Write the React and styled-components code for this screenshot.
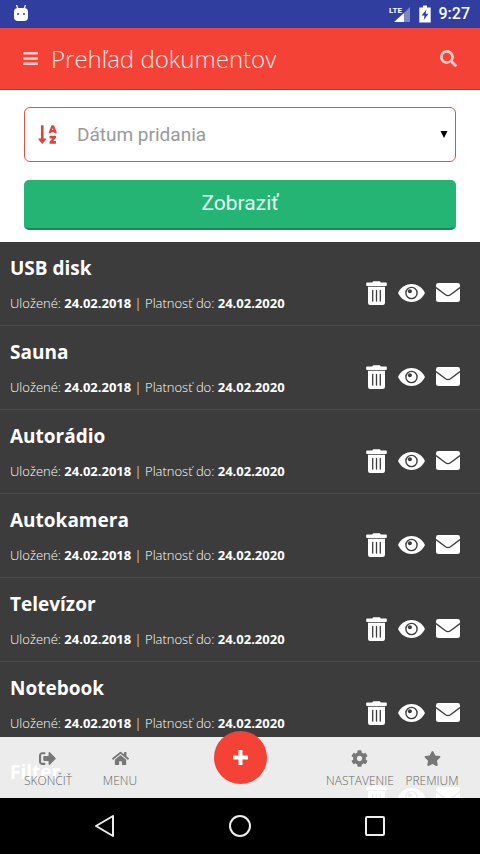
import React from 'react'
import styled, { createGlobalStyle } from 'styled-components'
import {
    FaBars,
    FaSearch,
    FaSortAlphaDown,
    FaSignOutAlt,
    FaHome,
    FaCog,
    FaStar,
} from 'react-icons/fa'

const GlobalStyle = createGlobalStyle`
    * {
        box-sizing: border-box;
    }
    body {
        margin: 0;
        font-family: 'Open Sans', 'Noto Sans', sans-serif;
    }
    button, select {
        font-family: inherit;
        border: 0;
        padding: 0;
        background: none;
        color: inherit;
    }
    svg {
        display: block;
    }
`

const Screen = styled.div`
    height: 100vh;
    display: flex;
    flex-direction: column;
    overflow: hidden;
    background: #fff;
`

const StatusBar = styled.div`
    height: 28px;
    flex: none;
    display: flex;
    align-items: center;
    justify-content: space-between;
    padding: 0 10px 0 13px;
    background: #303f9f;
    color: #fff;
`

const StatusIcons = styled.div`
    display: flex;
    align-items: center;
    gap: 8px;
`

const Clock = styled.span`
    font: 500 16px/28px Roboto, sans-serif;
`

const Header = styled.header`
    height: 62px;
    flex: none;
    display: flex;
    align-items: center;
    gap: 12px;
    padding: 0 23px 0 22px;
    background: #f44336;
    border-bottom: 1px solid #b23a32;
    color: #ffd0cb;
`

const Title = styled.h1`
    flex: 1;
    margin: 0;
    font-size: 24px;
    line-height: 32px;
    font-weight: 330;
    color: #ffebe8;
`

const IconButton = styled.button`
    display: flex;
    font-size: 17px;
`

const Main = styled.main`
    flex: 1;
    min-height: 0;
    position: relative;
`

const Scroller = styled.div`
    height: 100%;
    overflow: hidden;
`

const Form = styled.form`
    display: flex;
    flex-direction: column;
    gap: 18px;
    padding: 17px 24px 12px;
    font-family: Roboto, sans-serif;
`

const SelectBox = styled.label`
    height: 55px;
    display: flex;
    align-items: center;
    gap: 19px;
    padding: 0 7px 0 12px;
    border: 1px solid #d9534a;
    border-radius: 6px;
    color: #db4437;
`

const Select = styled.select`
    flex: 1;
    height: 100%;
    appearance: none;
    outline: none;
    font-size: 19px;
    color: #999;
`

const SubmitButton = styled.button`
    && {
        height: 50px;
        padding-bottom: 2px;
        background: #24b474;
        border-bottom: 2px solid #1b8757;
        border-radius: 5px;
        font-size: 21px;
        color: #e4fff3;
    }
`

const List = styled.ul`
    margin: 0;
    padding: 0;
    list-style: none;
    background: #3c3c3c;
    color: #fff;
`

const Row = styled.li`
    height: 84px;
    display: flex;
    align-items: center;
    justify-content: space-between;
    padding: 1px 20px 0 10px;
    border-bottom: 1px solid #4c4c4c;
`

const Name = styled.h2`
    margin: 0 0 13px;
    font-size: 19px;
    line-height: 24px;
    font-weight: 700;
`

const Dates = styled.p`
    margin: 0;
    font-size: 13px;
    line-height: 20px;
    font-weight: 330;

    b {
        font-weight: 700;
    }
`

const Actions = styled.div`
    display: flex;
    align-items: center;
    gap: 11px;
    padding-top: 17px;
`

const TabBar = styled.nav`
    position: absolute;
    left: 0;
    right: 0;
    bottom: 0;
    height: 61px;
    display: grid;
    grid-template-columns: 3fr 3fr 7fr 3fr 3fr;
    justify-items: center;
    padding: 0 12px;
    background: rgba(255, 255, 255, 0.9);
`

const Tab = styled.button`
    && {
        display: flex;
        flex-direction: column;
        align-items: center;
        justify-content: center;
        gap: 5px;
        padding-top: 4px;
        font-size: 12px;
        line-height: 18px;
        font-weight: 330;
        color: #666;
    }

    svg {
        font-size: 17px;
        color: #777;
    }
`

const AddButton = styled.button`
    && {
        width: 53px;
        height: 53px;
        margin-top: -6px;
        display: flex;
        align-items: center;
        justify-content: center;
        border-radius: 50%;
        background: #f44336;
        color: #fff;
    }
`

const SystemNav = styled.div`
    height: 56px;
    flex: none;
    display: flex;
    align-items: center;
    justify-content: center;
    gap: 111px;
    background: #000;
    color: #eee;
`

const BugdroidIcon = () => (
    <svg width="16" height="18" viewBox="0 0 16 18">
        <path d="M3.5 0l1.500 4M12.500 0L11 4" stroke="#fff" strokeWidth="1.2" />
        <rect x="1" y="3" width="14" height="13" rx="4" fill="#fff" />
        <circle cx="5" cy="9" r="1" fill="#303f9f" />
        <circle cx="11" cy="9" r="1" fill="#303f9f" />
    </svg>
)

const SignalIcon = () => (
    <svg width="22" height="18" viewBox="0 0 22 18">
        <path d="M21 2v15h-6V8z" fill="#7c86c6" />
        <path d="M15 8v9H5z" fill="#fff" />
        <text x="0" y="8" fontFamily="Roboto, sans-serif" fontSize="8" fontWeight="700" fill="#fff">
            LTE
        </text>
    </svg>
)

const BatteryIcon = () => (
    <svg width="12" height="18" viewBox="0 0 12 18">
        <path d="M4 .6h4v1.800h3.700V17.400H.3V2.400H4z" fill="#fff" />
        <path d="M7.500 4.500L2.500 10.600h3L4.700 15l4.800-6.200H6.600z" fill="#303f9f" />
    </svg>
)

const TrashIcon = () => (
    <svg width="21" height="24" viewBox="0 0 21 24" fill="#fff">
        <path d="M.9 1.500h5.200L7.200.2h6.600l1.100 1.300h5.200a.7.7 0 0 1 .7.700v2a.7.7 0 0 1-.7.700H.9a.7.7 0 0 1-.7-.7v-2a.7.7 0 0 1 .7-.7z" />
        <path d="M2 5.800h17v15.900a2.200 2.200 0 0 1-2.200 2.200H4.200A2.200 2.200 0 0 1 2 21.700z" />
        <path d="M6.700 9.500v10.500M10.500 9.500v10.500M14.300 9.500v10.500" stroke="#3c3c3c" strokeWidth="1.300" strokeLinecap="round" />
    </svg>
)

const EyeIcon = () => (
    <svg width="27" height="20" viewBox="0 0 27 20">
        <path
            d="M.4 9.200C3.200 4 8 1 13.500 1s10.300 3 13.100 8.200a1.600 1.600 0 0 1 0 1.600C23.800 16 19 19 13.500 19S3.200 16 .4 10.800a1.600 1.600 0 0 1 0-1.600z"
            fill="#fff"
        />
        <circle cx="13.500" cy="10" r="5.600" fill="none" stroke="#3c3c3c" strokeWidth="1.400" />
        <circle cx="11.900" cy="8.200" r="2" fill="#3c3c3c" />
    </svg>
)

const EnvelopeIcon = () => (
    <svg width="24" height="19" viewBox="0 0 24 19">
        <rect width="24" height="19" rx="2.300" fill="#fff" />
        <path d="M0 4.600l9.500 7.200c1.700 1.200 3.300 1.200 5 0L24 4.600" fill="none" stroke="#3c3c3c" strokeWidth="1.300" />
    </svg>
)

const CaretIcon = () => (
    <svg width="8" height="7" viewBox="0 0 8 7">
        <path d="M.5 0h7L4 7z" fill="#000" />
    </svg>
)

const PlusIcon = () => (
    <svg width="15" height="15" viewBox="0 0 15 15">
        <path d="M7.500 0v15M0 7.500h15" stroke="currentColor" strokeWidth="4" />
    </svg>
)

const documents = ['USB disk', 'Sauna', 'Autorádio', 'Autokamera', 'Televízor', 'Notebook', 'Filter']

const DocumentRow = ({ name }) => {
    return (
        <Row>
            <div>
                <Name>{name}</Name>
                <Dates>
                    Uložené: <b>24.02.2018</b> | Platnosť do: <b>24.02.2020</b>
                </Dates>
            </div>
            <Actions>
                <IconButton aria-label="Vymazať"><TrashIcon /></IconButton>
                <IconButton aria-label="Zobraziť"><EyeIcon /></IconButton>
                <IconButton aria-label="Poslať"><EnvelopeIcon /></IconButton>
            </Actions>
        </Row>
    )
}

const App = () => {
    return (
        <Screen>
            <GlobalStyle />
            <StatusBar>
                <BugdroidIcon />
                <StatusIcons>
                    <SignalIcon />
                    <BatteryIcon />
                    <Clock>9:27</Clock>
                </StatusIcons>
            </StatusBar>
            <Header>
                <IconButton aria-label="Menu"><FaBars /></IconButton>
                <Title>Prehľad dokumentov</Title>
                <IconButton aria-label="Hľadať"><FaSearch /></IconButton>
            </Header>
            <Main>
                <Scroller>
                    <Form>
                        <SelectBox>
                            <FaSortAlphaDown size={21} />
                            <Select aria-label="Zoradiť podľa">
                                <option>Dátum pridania</option>
                            </Select>
                            <CaretIcon />
                        </SelectBox>
                        <SubmitButton type="button">Zobraziť</SubmitButton>
                    </Form>
                    <List>
                        {documents.map(name => (
                            <DocumentRow key={name} name={name} />
                        ))}
                    </List>
                </Scroller>
                <TabBar>
                    <Tab><FaSignOutAlt />SKONČIŤ</Tab>
                    <Tab><FaHome />MENU</Tab>
                    <AddButton aria-label="Pridať"><PlusIcon /></AddButton>
                    <Tab><FaCog />NASTAVENIE</Tab>
                    <Tab><FaStar />PREMIUM</Tab>
                </TabBar>
            </Main>
            <SystemNav>
                <IconButton aria-label="Späť">
                    <svg width="24" height="24" viewBox="0 0 24 24" fill="none" stroke="currentColor" strokeWidth="2">
                        <path d="M20 2v20L3 12z" strokeLinejoin="round" />
                    </svg>
                </IconButton>
                <IconButton aria-label="Domov">
                    <svg width="24" height="24" viewBox="0 0 24 24" fill="none" stroke="currentColor" strokeWidth="2">
                        <circle cx="12" cy="12" r="10" />
                    </svg>
                </IconButton>
                <IconButton aria-label="Prehľad">
                    <svg width="24" height="24" viewBox="0 0 24 24" fill="none" stroke="currentColor" strokeWidth="2">
                        <rect x="3" y="3" width="18" height="18" rx="1" />
                    </svg>
                </IconButton>
            </SystemNav>
        </Screen>
    )
}

export default App
